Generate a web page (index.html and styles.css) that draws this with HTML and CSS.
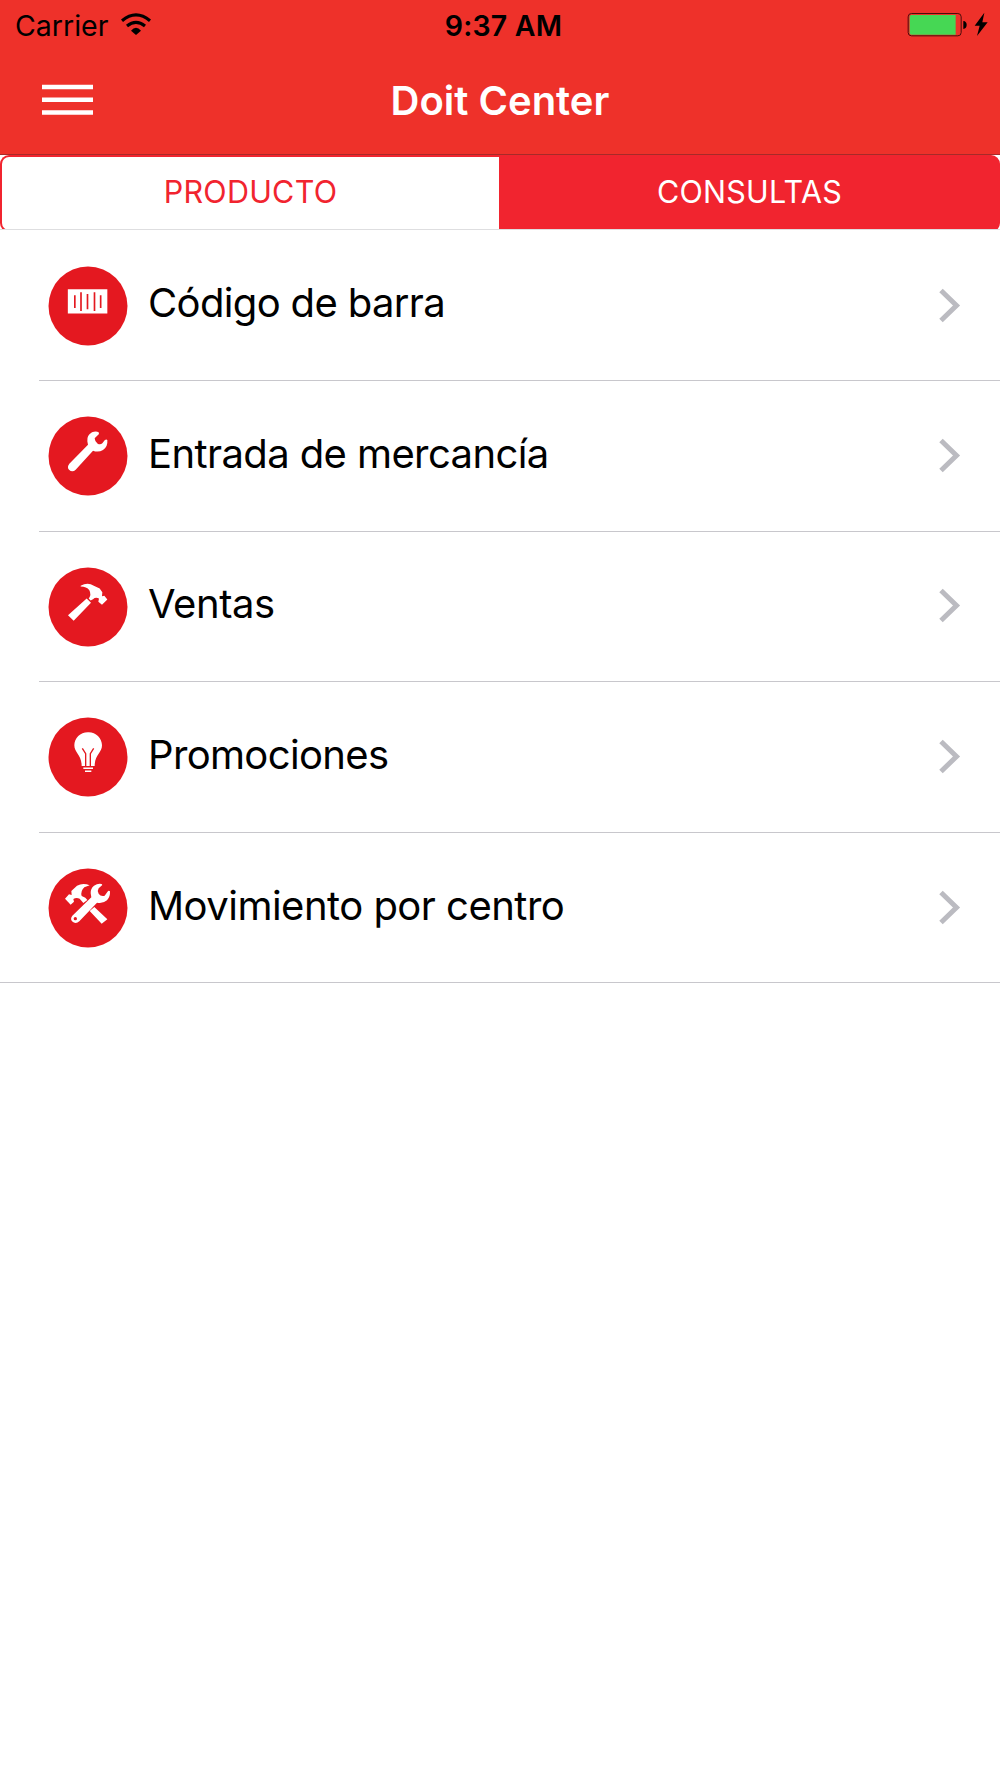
FILE: index.html
```html
<!DOCTYPE html>
<html lang="es">
<head>
<meta charset="utf-8">
<title>Doit Center</title>
<link rel="stylesheet" href="styles.css">
</head>
<body>
<header class="header">
  <div class="status">
    <div class="status-left">
      <span class="carrier">Carrier</span>
      <svg class="wifi" width="30" height="22" viewBox="362 38 90 66">
        <g fill="none" stroke="#000" stroke-width="9.500"><path d="M365 61Q407 26 449 61"/><path d="M380 77Q407 55 434 77"/></g>
        <path d="M392 91Q407 73 422 91L407 104Z"/>
      </svg>
    </div>
    <span class="time">9:37 AM</span>
    <div class="status-right">
      <svg width="82" height="26" viewBox="802 36 246 78">
        <rect x="805.500" y="40.500" width="159" height="67" rx="10" fill="none" stroke="#4a0d0b" stroke-width="3"/>
        <path d="M815 45H948V104H815Q810 104 810 99V50Q810 45 815 45Z" fill="#46d754"/>
        <path d="M971 63Q981 64 981 75T971 87Z"/>
        <path d="M1034 38L1005 77H1020L1012 108L1044 67H1028Z"/>
      </svg>
    </div>
  </div>
  <div class="navbar">
    <svg class="menu" width="51" height="32" viewBox="0 0 51 32"><path d="M0 3H51M0 15.700H51M0 28.500H51" stroke="#fff" stroke-width="4.500"/></svg>
    <h1 class="title">Doit Center</h1>
  </div>
</header>
<nav class="tabs">
  <div class="tab"><span>PRODUCTO</span></div>
  <div class="tab tab-active"><span>CONSULTAS</span></div>
</nav>
<main class="list">
  <div class="row">
    <svg class="icon" viewBox="53 48 240 240"><circle cx="173" cy="168" r="118.500" fill="#e41820"/>
      <path d="M112.500 118H231V190.500H112.500Z" fill="#fff"/>
      <path d="M133.500 136V174M152 127V183M171.500 132V178M192.500 127V183M211 136V174" stroke="#e41820" stroke-width="5"/></svg>
    <div class="body"><span class="label barcode">Código de barra</span><svg class="chevron" viewBox="0 0 22 36"><path d="M2 2.500L17.500 17.500L2 32.500"/></svg></div>
  </div>
  <div class="row">
    <svg class="icon" viewBox="53 50 240 240"><circle cx="173" cy="170" r="118.500" fill="#e41820"/>
      <path d="M205 99Q197 94 185 99Q169 108 171 126L173 136L117 193Q109 203 116 211Q126 220 136 211L188 154Q204 160 218 152Q233 142 231 122Q228 118 223 123L216 132Q210 137 202 133Q193 126 193 117L206 104Z" fill="#fff"/></svg>
    <div class="body"><span class="label entry">Entrada de mercancía</span><svg class="chevron" viewBox="0 0 22 36"><path d="M2 2.500L17.500 17.500L2 32.500"/></svg></div>
  </div>
  <div class="row">
    <svg class="icon" viewBox="53 51.500 240 240"><circle cx="173" cy="171.500" r="118.500" fill="#e41820"/>
      <path d="M151 108Q166 99 181 103L208 116L216 127L215 139L222 138L231 149L215 165L204 156L206 146Q196 141 188 148L181 152L175 146Q184 134 177 121Q169 110 151 110ZM169 146L182 159L130 213L113 196Z" fill="#fff"/></svg>
    <div class="body"><span class="label sales">Ventas</span><svg class="chevron" viewBox="0 0 22 36"><path d="M2 2.500L17.500 17.500L2 32.500"/></svg></div>
  </div>
  <div class="row">
    <svg class="icon" viewBox="53 53 240 240"><circle cx="173" cy="173" r="118.500" fill="#e41820"/>
      <path d="M174 99C151 98 132 116 132 138C132 161 154 166 154 200H193C193 166 215 161 215 138C215 116 195 98 174 99Z" fill="#fff"/>
      <path d="M156 147L166 163V200M190 147L180 163V200" fill="none" stroke="#e41820" stroke-width="4"/>
      <path d="M159 206.500H188M164 215.500H183" stroke="#fff" stroke-width="4.500"/></svg>
    <div class="body"><span class="label promos">Promociones</span><svg class="chevron" viewBox="0 0 22 36"><path d="M2 2.500L17.500 17.500L2 32.500"/></svg></div>
  </div>
  <div class="row">
    <svg class="icon" viewBox="53 55 240 240"><circle cx="173" cy="175" r="118.500" fill="#e41820"/>
      <path d="M178 107Q158 99 140 108L123 124L124 136L116 134L104 147L121 165L131 156L129 148Q138 142 148 147L159 160L171 151L165 144L154 139Q150 124 162 113ZM192 172L231 209L214 222L178 184Z" fill="#fff"/>
      <path d="M214 103Q203 100 191 108Q180 117 181 131L183 143L126 198Q119 207 125 215Q136 225 147 215L200 159Q217 163 230 152Q240 142 239 125Q235 121 231 127L223 138Q211 141 205 132Q200 123 205 116L216 106Z" fill="#fff"/><circle cx="135" cy="207" r="5" fill="#e41820"/></svg>
    <div class="body"><span class="label moves">Movimiento por centro</span><svg class="chevron" viewBox="0 0 22 36"><path d="M2 2.500L17.500 17.500L2 32.500"/></svg></div>
  </div>
</main>
</body>
</html>
```
FILE: styles.css
```css
* { box-sizing: border-box; }
body { margin: 0; background: #fff; color: #000; font-family: Inter, "Liberation Sans", sans-serif; }
svg { display: block; flex: none; }
span, h1 { white-space: nowrap; }
.header { height: 155px; background: #ee312a; border-bottom: 1px solid #a72a28; }
.status { height: 50px; display: grid; grid-template-columns: 1fr auto 1fr; align-items: center; font-size: 28.5px; line-height: 50px; }
.status-left { display: flex; align-items: center; padding-left: 15px; gap: 13px; }
.carrier, .time { padding-top: 1px; }
.wifi { margin-bottom: 4px; }
.time { font-weight: 600; padding-left: 7px; letter-spacing: 0.2px; }
.status-right { display: flex; justify-content: flex-end; padding-right: 11px; padding-bottom: 2px; }
.navbar { height: 104px; display: grid; grid-template-columns: 1fr auto 1fr; padding-left: 42px; padding-right: 42px; align-items: center; }
.menu { margin-bottom: 4px; }
.title { margin: 0; padding-bottom: 3px; color: #fff; font-size: 40px; line-height: 48px; font-weight: 600; }
.tabs { height: 75px; display: grid; grid-template-columns: 499px 501px; border-bottom: 1px solid #dedee0; overflow: hidden; }
.tab { height: 77px; display: flex; align-items: center; justify-content: center; border: 2px solid #f1242f; border-right: 0; border-radius: 9px 0 0 9px; color: #f1242f; font-size: 30.5px; line-height: 36px; padding-bottom: 3px; letter-spacing: 0.25px; }
.tab-active { background: #f1242f; color: #fff; border: 0; border-radius: 0 9px 9px 0; }
.list { display: grid; grid-template-rows: 151px repeat(3, 150.500px) 149.500px; border-bottom: 1px solid #c8c7cc; }
.row { display: flex; align-items: stretch; padding-left: 39px; }
.row:first-child, .row:last-child { padding-top: 1px; }
.icon { width: 80px; height: 80px; align-self: center; margin-left: 9px; margin-right: -89px; }
.body { flex: 1; display: flex; align-items: center; justify-content: space-between; padding-left: 109px; padding-right: 39.500px; border-bottom: 1px solid #c8c7cc; }
.row:last-child .body { border-bottom: 0; }
.label { font-size: 40px; line-height: 48px; padding-bottom: 4.500px; }
.barcode { letter-spacing: -0.650px; }
.entry { letter-spacing: -0.600px; }
.sales { letter-spacing: -0.450px; }
.promos { letter-spacing: -0.650px; }
.moves { letter-spacing: -0.520px; }
.chevron { width: 22px; height: 36px; fill: none; stroke: #bbbbc1; stroke-width: 5; }
```
